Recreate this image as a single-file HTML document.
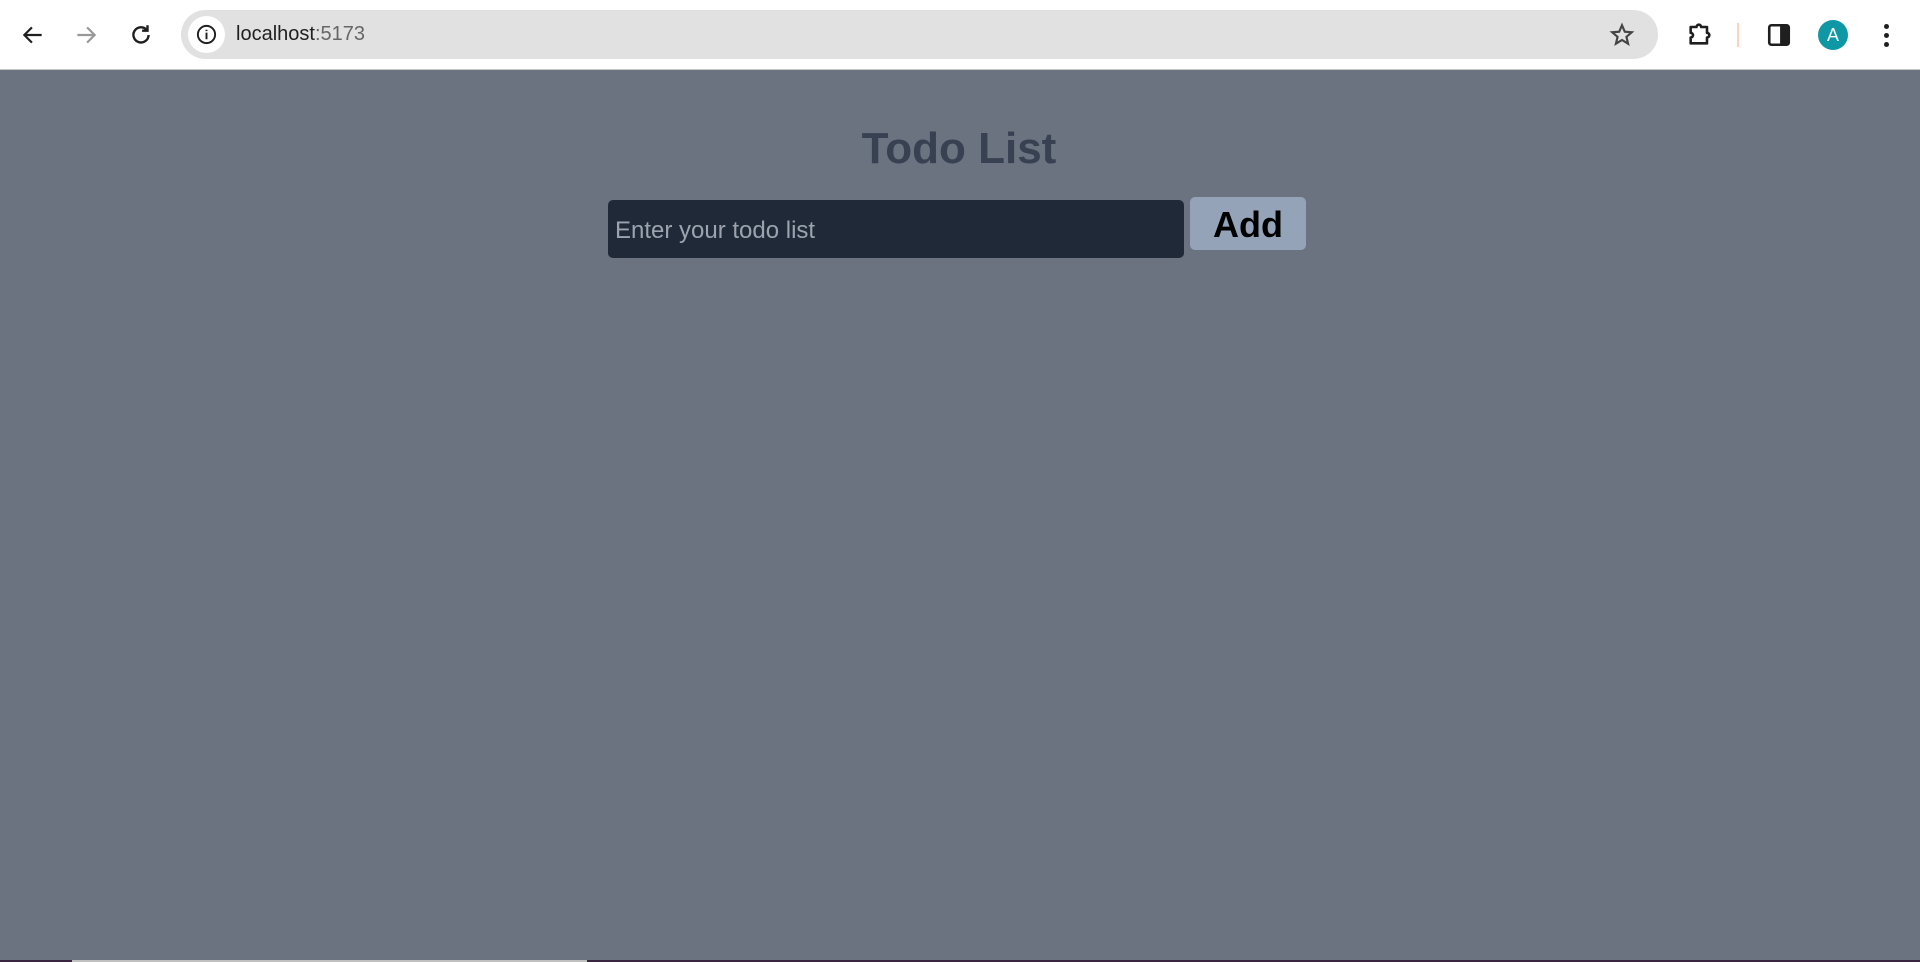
<!DOCTYPE html>
<html><head><meta charset="utf-8"><style>
*{margin:0;padding:0;box-sizing:border-box}
body{width:1920px;height:962px;overflow:hidden;background:#6b7280;font-family:"Liberation Sans",sans-serif;position:relative}
.bar{position:absolute;left:0;top:0;width:1920px;height:70px;background:#fff;border-bottom:1px solid #c8c8c8}
.url{position:absolute;left:181px;top:10px;width:1477px;height:49px;background:#e1e1e1;border-radius:25px}
.info{position:absolute;left:188px;top:16px;width:37px;height:37px;border-radius:50%;background:#fff}
.urltext{position:absolute;left:236px;top:23px;font-size:20px;color:#1f1f1f}
.urltext span{color:#666}
.abs{position:absolute}
h1{position:absolute;left:0;width:1918px;top:124px;text-align:center;font-size:44px;font-weight:bold;color:#374151}
.inp{position:absolute;left:608px;top:200px;width:576px;height:58px;background:#1f2937;border-radius:5px;color:#9ca3af;font-size:24px;padding:17px 0 0 7px}
.btn{position:absolute;left:1190px;top:197px;width:116px;height:53px;background:#94a3b8;border-radius:5px;font-size:36px;font-weight:bold;color:#000;text-align:center;line-height:56px}
.task{position:absolute;left:0;top:960px;width:1920px;height:2px;background:#3a2540}
</style></head><body>
<div class="bar">
<svg class="abs" style="left:20px;top:22px" width="26" height="26" viewBox="0 0 24 24"><path d="M20 12H5M11 5l-7 7 7 7" fill="none" stroke="#1f1f1f" stroke-width="2"/></svg>
<svg class="abs" style="left:73px;top:22px" width="26" height="26" viewBox="0 0 24 24"><path d="M4 12h15M13 5l7 7-7 7" fill="none" stroke="#999" stroke-width="2"/></svg>
<svg class="abs" style="left:128px;top:22px" width="26" height="26" viewBox="0 0 24 24"><path d="M19 12a7 7 0 1 1-2-5M18 3v5h-5" fill="none" stroke="#1f1f1f" stroke-width="2.2"/></svg>
<div class="url"></div>
<div class="info"></div>
<svg class="abs" style="left:195px;top:23px" width="23" height="23" viewBox="0 0 24 24"><circle cx="12" cy="12" r="9" fill="none" stroke="#1f1f1f" stroke-width="2"/><path d="M12 10v7M12 7v1.5" stroke="#1f1f1f" stroke-width="2"/></svg>
<div class="urltext">localhost<span>:5173</span></div>
<svg class="abs" style="left:1609px;top:22px" width="26" height="26" viewBox="0 0 24 24"><path d="M12 3l2.6 6 6.4.5-4.9 4.2 1.5 6.3L12 16.6 6.4 20l1.5-6.3L3 9.5 9.4 9z" fill="none" stroke="#444" stroke-width="2"/></svg>
<svg class="abs" style="left:1686px;top:20px" width="28" height="28" viewBox="0 0 24 24"><path d="M4 6h5a2 2 0 0 1 4 0h5v5a2 2 0 0 1 0 4v5H4v-5a2 2 0 0 0 0-4z" fill="none" stroke="#1f1f1f" stroke-width="2.2" stroke-linejoin="round"/></svg>
<div class="abs" style="left:1737px;top:23px;width:2px;height:24px;background:#f8d3bf"></div>
<svg class="abs" style="left:1766px;top:22px" width="26" height="26" viewBox="0 0 24 24"><rect x="3" y="3" width="18" height="18" rx="2" fill="none" stroke="#1f1f1f" stroke-width="2.4"/><rect x="13" y="3" width="8" height="18" fill="#1f1f1f"/></svg>
<div class="abs" style="left:1818px;top:20px;width:30px;height:30px;border-radius:50%;background:#0e98a5;color:#fff;font-size:18px;text-align:center;line-height:30px">A</div>
<div class="abs" style="left:1884px;top:24px;width:5px;height:5px;border-radius:50%;background:#1f1f1f"></div>
<div class="abs" style="left:1884px;top:33px;width:5px;height:5px;border-radius:50%;background:#1f1f1f"></div>
<div class="abs" style="left:1884px;top:42px;width:5px;height:5px;border-radius:50%;background:#1f1f1f"></div>
</div>
<h1>Todo List</h1>
<div class="inp">Enter your todo list</div>
<div class="btn">Add</div>
<div class="task"></div>
<div class="abs" style="left:72px;top:960px;width:515px;height:2px;background:#c0c0c0"></div>
</body></html>
